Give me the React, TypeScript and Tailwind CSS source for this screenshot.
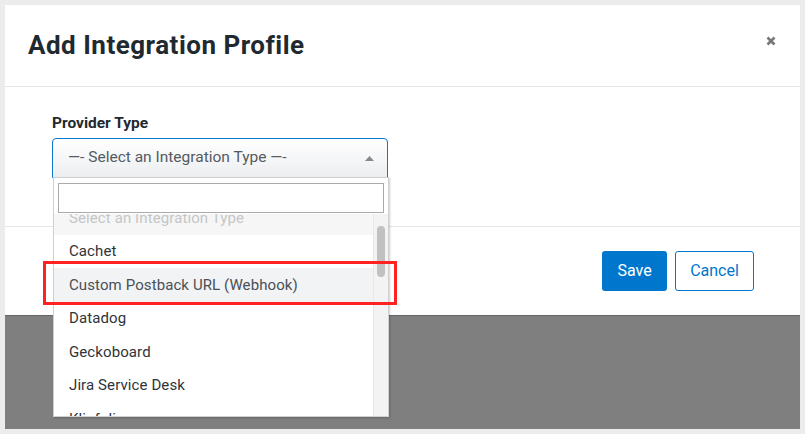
export default function App() {
  const items = [
    "Select an Integration Type",
    "Cachet",
    "Custom Postback URL (Webhook)",
    "Datadog",
    "Geckoboard",
    "Jira Service Desk",
    "Klipfolio",
  ];

  return (
    <div className="w-[805px] h-[434px] bg-[#ececec] p-[5px] font-['Roboto',sans-serif]">
      <div className="relative w-[795px] h-[424px] bg-[#7f7f7f]">
        {/* MODAL */}
        <div className="bg-white h-[311px] border-b border-[#666]">
          <div className="h-[82px] border-b border-[#e6e6e6] flex items-center justify-between pl-[23px] pr-[24px]">
            <h1 className="text-[26px] font-bold text-[#1f2a30] tracking-[0.5px]">
              Add Integration Profile
            </h1>
            <svg width="10" height="10" viewBox="0 0 10 10" className="-mt-[9px]">
              <path d="M1.5 1.5 L8.5 8.5 M8.5 1.5 L1.5 8.5" stroke="#777" strokeWidth="2.6" />
            </svg>
          </div>

          <div className="h-[139px] pl-[47px] pt-[26px]">
            <p className="text-[15.5px] font-bold text-[#1f2a30] leading-[20px]">
              Provider Type
            </p>
            <div className="mt-[5px] w-[336px] h-[40px] border border-[#0a79c9] rounded-t-[4px] bg-gradient-to-b from-white to-[#eceef0] flex items-center justify-between pl-[15px] pr-[13px]">
              <span className="text-[15.5px] text-[#555b61]">
                —- Select an Integration Type —-
              </span>
              <svg width="9" height="5" viewBox="0 0 9 5">
                <path d="M0 5 L4.5 0 L9 5 Z" fill="#888" />
              </svg>
            </div>
          </div>

          <div className="h-[89px] border-t border-[#e6e6e6] flex items-center justify-end gap-[8px] pr-[46px]">
            <button className="w-[65px] h-[40px] rounded-[3px] bg-[#0077cc] text-white text-[16px]">
              Save
            </button>
            <button className="w-[79px] h-[40px] rounded-[3px] border border-[#0077cc] bg-white text-[#0077cc] text-[16px]">
              Cancel
            </button>
          </div>
        </div>

        {/* DROPDOWN */}
        <div className="absolute left-[48px] top-[172px] w-[336px] h-[240px] bg-white border border-[#d0d0d0] shadow-[1px_1px_2px_rgba(0,0,0,0.2)] flex flex-col">
          <div className="px-[4px] pt-[5px]">
            <div className="h-[30px] border border-[#aaa] bg-white" />
          </div>
          <div className="relative flex-1 overflow-hidden mt-[1px]">
            <div className="-mt-[13px] pr-[15px]">
              {items.map((item, index) => (
                <div
                  key={item}
                  className={`h-[33.5px] flex items-center pl-[15px] text-[15px] tracking-[0.1px] ${
                    index === 0
                      ? "bg-[#f6f6f7] text-[#c4c6c8]"
                      : index === 2
                      ? "bg-[#f1f3f5] text-[#4a5056]"
                      : "text-[#2f3439]"
                  }`}
                >
                  {item}
                </div>
              ))}
            </div>
            <div className="absolute right-0 top-0 bottom-0 w-[15px] bg-[#f3f3f3] border-l border-[#e8e8e8]">
              <div className="mt-[12px] ml-[3px] w-[8px] h-[51px] rounded-full bg-[#c1c1c1]" />
            </div>
          </div>
        </div>

        {/* HIGHLIGHT */}
        <div className="absolute left-[38px] top-[256px] w-[354px] h-[44px] border-[3px] border-[#fe2222]" />
      </div>
    </div>
  );
}
